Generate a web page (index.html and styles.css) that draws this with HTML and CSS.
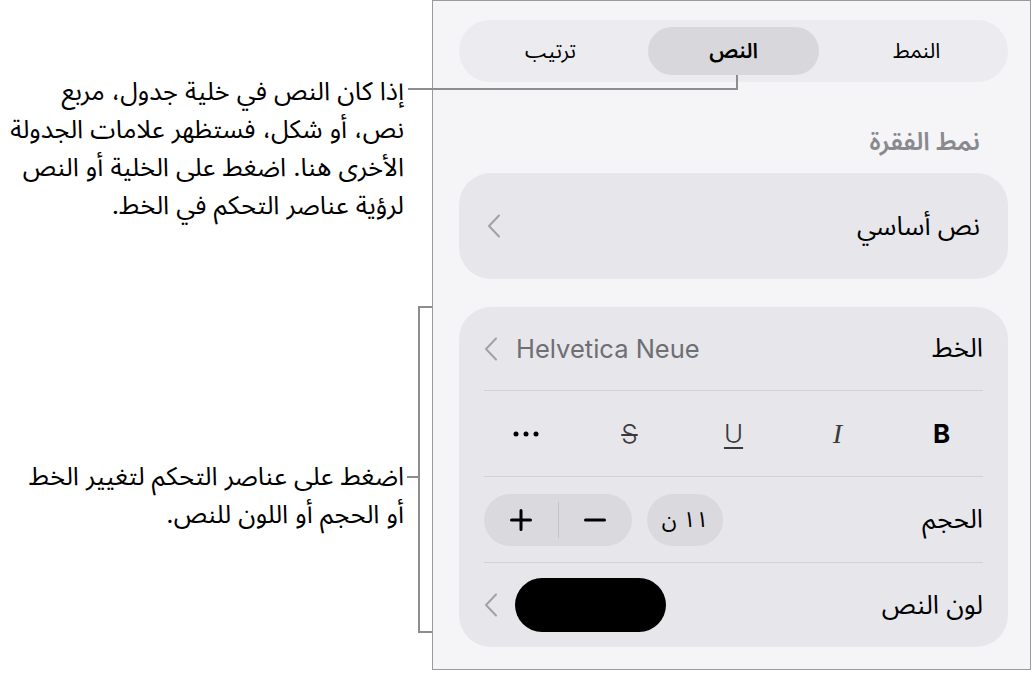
FILE: index.html
```html
<!DOCTYPE html>
<html lang="ar">

<head>
    <meta charset="UTF-8">
    <meta name="viewport" content="width=device-width, initial-scale=1.0">
    <title>النص</title>
    <link rel="stylesheet" href="styles.css">
</head>

<body>
    <div class="page">
        <div class="notes">
            <p class="note note-top">إذا كان النص في خلية جدول، مربع<br>نص، أو شكل، فستظهر علامات الجدولة<br>الأخرى هنا. اضغط على الخلية أو النص<br>لرؤية عناصر التحكم في الخط.</p>
            <p class="note note-bottom">اضغط على عناصر التحكم لتغيير الخط<br>أو الحجم أو اللون للنص.</p>
        </div>

        <aside class="panel" dir="rtl">
            <div class="tabs">
                <div class="tab">النمط</div>
                <div class="tab active">النص</div>
                <div class="tab">ترتيب</div>
            </div>

            <h2 class="section-title">نمط الفقرة</h2>

            <div class="card style-card">
                <span class="label">نص أساسي</span>
                <svg class="chev" viewBox="0 0 14 24" width="14" height="24"><path d="M12 1.5 L2 12 L12 22.5" /></svg>
            </div>

            <div class="card font-card">
                <div class="row row-font">
                    <span class="label">الخط</span>
                    <div class="trail">
                        <span class="font-name" dir="ltr">Helvetica Neue</span>
                        <svg class="chev" viewBox="0 0 14 24" width="14" height="24"><path d="M12 1.5 L2 12 L12 22.5" /></svg>
                    </div>
                </div>
                <div class="sep"></div>
                <div class="tools">
                    <span class="tool tool-b">B</span>
                    <span class="tool tool-i">I</span>
                    <span class="tool tool-u">U</span>
                    <span class="tool tool-s">S</span>
                    <span class="tool tool-more">
                        <svg viewBox="0 0 26 6" width="26" height="6"><circle cx="3" cy="3" r="2.5" /><circle cx="13" cy="3" r="2.5" /><circle cx="23" cy="3" r="2.5" /></svg>
                    </span>
                </div>
                <div class="sep"></div>
                <div class="row row-size">
                    <span class="label">الحجم</span>
                    <div class="trail">
                        <span class="size-pill">١١ ن</span>
                        <div class="stepper">
                            <span class="step">
                                <svg viewBox="0 0 22 22" width="22" height="22"><path d="M1.5 11 H20.5" /></svg>
                            </span>
                            <span class="step-div"></span>
                            <span class="step">
                                <svg viewBox="0 0 22 22" width="22" height="22"><path d="M1.5 11 H20.5 M11 1.5 V20.5" /></svg>
                            </span>
                        </div>
                    </div>
                </div>
                <div class="sep"></div>
                <div class="row row-color">
                    <span class="label">لون النص</span>
                    <div class="trail">
                        <span class="swatch"></span>
                        <svg class="chev" viewBox="0 0 14 24" width="14" height="24"><path d="M12 1.5 L2 12 L12 22.5" /></svg>
                    </div>
                </div>
            </div>
        </aside>

        <!-- leader lines from the notes to the panel -->
        <div class="lead lead-h"></div>
        <div class="lead lead-v"></div>
        <div class="lead lead-tick"></div>
        <div class="bracket"></div>
    </div>
</body>

</html>
```

FILE: styles.css
```css
* {
    box-sizing: border-box;
}

body {
    margin: 0;
    background: #fff;
    color: #000;
    font-family: "Inter", "Noto Sans Arabic", "DejaVu Sans", sans-serif;
}

.page {
    position: relative;
    display: flex;
    width: 1033px;
    height: 673px;
}

/* left column with the explanations */
.notes {
    width: 432px;
    padding-top: 72px;
    padding-right: 28px;
    direction: rtl;
}

.note {
    margin: 0;
    font-size: 25.5px;
    line-height: 38px;
    white-space: nowrap;
}

.note-bottom {
    margin-top: 233px;
}

/* inspector panel */
.panel {
    width: 599px;
    height: 670px;
    border: 1px solid #9a9a9c;
    background: #f5f5f8;
    padding: 0 22px 0 26px;
}

.tabs {
    margin-top: 19px;
    height: 62px;
    border-radius: 31px;
    background: #ececf0;
    display: grid;
    grid-template-columns: repeat(3, 1fr);
}

.tab {
    margin: 7px 6px;
    border-radius: 24px;
    display: flex;
    align-items: center;
    justify-content: center;
    font-size: 21px;
}

.tab.active {
    background: #d8d8dc;
    font-weight: 600;
}

.section-title {
    margin: 44px 28px 0 0;
    font-size: 25px;
    line-height: 30px;
    font-weight: 600;
    color: #8a8a8e;
}

.card {
    background: #e7e7eb;
    border-radius: 32px;
}

.label {
    font-size: 26px;
}

.chev {
    flex: none;
}

.chev path {
    fill: none;
    stroke: #a1a1a6;
    stroke-width: 2;
    stroke-linecap: round;
    stroke-linejoin: round;
}

.style-card {
    margin-top: 17px;
    height: 106px;
    padding: 0 28px;
    display: flex;
    align-items: center;
    justify-content: space-between;
}

.font-card {
    margin-top: 28px;
}

.row {
    margin: 0 25px;
    display: flex;
    align-items: center;
    justify-content: space-between;
}

.row-font {
    height: 83px;
}

.row-size {
    height: 85px;
}

.row-color {
    height: 84px;
}

.trail {
    display: flex;
    align-items: center;
}

.sep {
    height: 1px;
    margin: 0 25px;
    background: #d2d2d6;
}

.font-name {
    margin-left: 18px;
    font-size: 25.5px;
    color: #6e6e73;
}

/* bold / italic / underline / strike / more */
.tools {
    height: 85px;
    display: grid;
    grid-template-columns: repeat(5, 104px);
    justify-content: center;
    align-items: center;
    justify-items: center;
}

.tool {
    font-size: 26px;
    line-height: 32px;
    font-weight: 300;
    color: #3a3a3c;
}

.tool-b {
    font-weight: 700;
    color: #000;
}

.tool-i {
    font-family: "Liberation Serif", serif;
    font-style: italic;
    font-weight: 400;
    font-size: 28px;
}

.tool-u {
    text-decoration: underline;
    text-decoration-thickness: 1.5px;
    text-underline-offset: 4px;
}

.tool-s {
    text-decoration: line-through;
    text-decoration-thickness: 1.5px;
}

.tool-more svg {
    display: block;
    fill: #000;
}

.size-pill {
    width: 76px;
    height: 52px;
    margin-left: 15px;
    border-radius: 26px;
    background: #dadade;
    display: flex;
    align-items: center;
    justify-content: center;
    font-size: 22px;
}

.stepper {
    width: 148px;
    height: 52px;
    border-radius: 26px;
    background: #dadade;
    display: flex;
    align-items: center;
}

.step {
    flex: 1;
    display: flex;
    justify-content: center;
}

.step svg {
    display: block;
}

.step path {
    fill: none;
    stroke: #000;
    stroke-width: 3;
    stroke-linecap: round;
}

.step-div {
    width: 1px;
    height: 36px;
    background: #c4c4c8;
}

.swatch {
    width: 151px;
    height: 54px;
    margin-left: 17px;
    border-radius: 27px;
    background: #000;
}

/* leader lines */
.lead {
    position: absolute;
    background: #8d8d8f;
}

.lead-h {
    left: 408px;
    top: 88px;
    width: 330px;
    height: 2px;
}

.lead-v {
    left: 736px;
    top: 75px;
    width: 2px;
    height: 15px;
}

.lead-tick {
    left: 407px;
    top: 476px;
    width: 12px;
    height: 2px;
}

.bracket {
    position: absolute;
    left: 418px;
    top: 306px;
    width: 14px;
    height: 327px;
    border: 2px solid #8d8d8f;
    border-right: 0;
}
```
